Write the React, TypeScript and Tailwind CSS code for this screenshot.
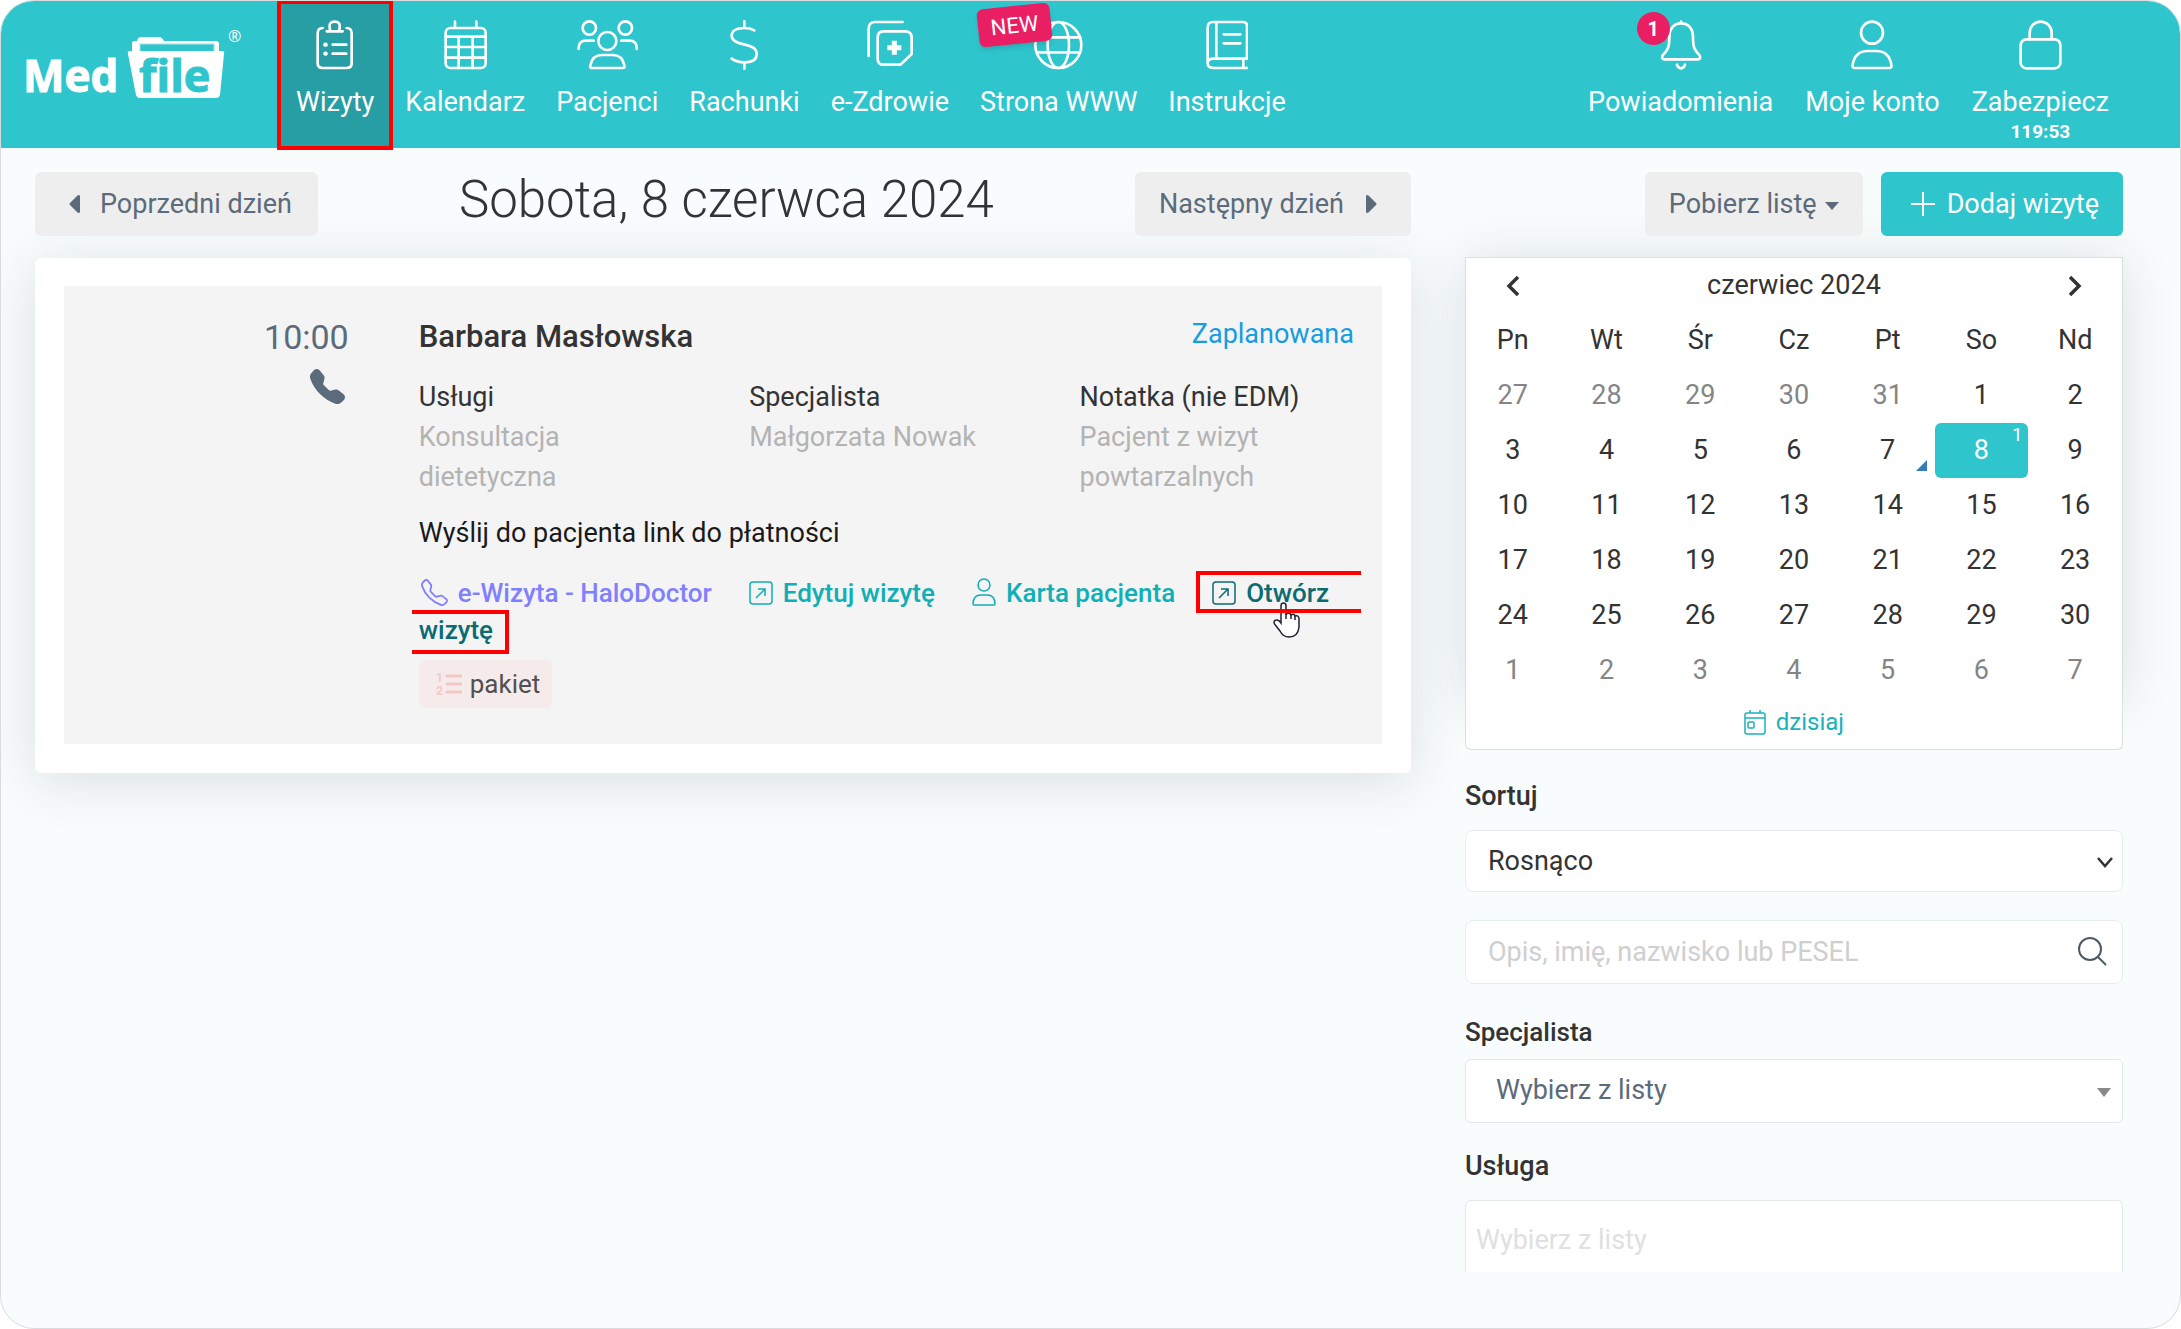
import { useState } from "react";
import type { ReactNode } from "react";
import { BsTelephone, BsTelephoneFill } from "react-icons/bs";
import { twMerge } from "tailwind-merge";

interface IconProps {
  children: ReactNode;
  box: string;
  className?: string;
}

// Nav icons share a 50px height, three drawing units per pixel
function NavIcon({ children, box, className }: IconProps) {
  return (
    <svg
      viewBox={box}
      className={twMerge("h-[50px] w-auto", className)}
      fill="none"
      stroke="currentColor"
      strokeWidth={8}
      strokeLinecap="round"
      strokeLinejoin="round"
      aria-hidden="true"
    >
      {children}
    </svg>
  );
}

const icons = {
  visits: (
    <NavIcon box="0 0 112 150">
      <path d="M20 24Q5 24 5 40V130Q5 144 19 144H93Q107 144 107 130V40Q107 24 92 24" />
      <path d="M32 34H80M43 33C36 8 46 5 56 5s20 3 13 28" />
      <path d="M28 74h1M28 101h1" strokeWidth={13} />
      <path d="M50 74H91M50 101H91" />
    </NavIcon>
  ),
  calendar: (
    <NavIcon box="0 0 130 150">
      <rect x="5" y="24" width="120" height="120" rx="14" />
      <path d="M5 50H125M5 81H125M5 113H125M44 50V144M86 50V144M33 5V22M97 5V22" />
    </NavIcon>
  ),
  patients: (
    <NavIcon box="0 0 184 150">
      <circle cx="37" cy="24" r="20" />
      <circle cx="145" cy="24" r="20" />
      <circle cx="91" cy="63" r="27" />
      <path d="M5 87V84Q5 62 27 62H50M179 87V84Q179 62 157 62H133" />
      <path d="M44 144Q38 144 40 136Q46 105 75 105H107Q136 105 142 136Q144 144 138 144Z" />
    </NavIcon>
  ),
  bills: (
    <NavIcon box="0 0 85 150">
      <path d="M43 4V22M43 128V146M73 31Q60 24 44 24C18 24 5 34 5 47C5 62 20 68 42 73C66 79 80 84 80 102C80 120 64 127 44 127C28 127 16 124 5 116" />
    </NavIcon>
  ),
  health: (
    <NavIcon box="0 0 138 150">
      <path d="M5 108V26Q5 6 25 6H107" />
      <path d="M50 34H114Q134 34 134 54V102L100 134H50Q32 134 32 116V52Q32 34 50 34Z" />
      <path d="M82 62V104M61 83H103" strokeWidth={15} strokeLinecap="butt" />
    </NavIcon>
  ),
  website: (
    <NavIcon box="0 0 146 150">
      <circle cx="73" cy="75" r="69" />
      <ellipse cx="73" cy="75" rx="32" ry="69" />
      <path d="M8 52H138M8 97H138" />
    </NavIcon>
  ),
  manual: (
    <NavIcon box="0 0 128 150">
      <path d="M5 130V22Q5 6 21 6H111Q123 6 123 18V116H21Q5 116 5 130Q5 144 21 144H124M31 6V116M112 116V144M53 43H103M53 70H103" />
    </NavIcon>
  ),
  bell: (
    <NavIcon box="0 0 127 150">
      <path d="M63 5V10M63 10C40 10 28 28 28 50C28 82 24 90 8 106Q3 118 14 118H113Q124 118 119 106C103 90 99 82 99 50C99 28 87 10 63 10Z" />
      <path d="M51 134Q54 145 63 145Q72 145 75 134" />
    </NavIcon>
  ),
  account: (
    <NavIcon box="0 0 126 150">
      <circle cx="63" cy="38" r="33" />
      <path d="M12 144Q3 144 5 134Q12 93 50 93H76Q114 93 121 134Q123 144 114 144Z" />
    </NavIcon>
  ),
  lock: (
    <NavIcon box="0 0 129 150">
      <rect x="5" y="58" width="119" height="87" rx="17" />
      <path d="M32 58V38A33 33 0 0 1 98 38V58" />
    </NavIcon>
  ),
};

function Logo() {
  return (
    <svg
      viewBox="0 0 230 100"
      className="mt-2 h-[100px] w-[230px] font-['Open_Sans',sans-serif] font-bold"
      role="img"
      aria-label="MedFile"
    >
      <path
        d="M109 30V24Q109 22 112 22H114Q115 18 118 18H136Q139 18 141 22H193Q196 22 196 25V34H109Z"
        fill="#fff"
      />
      <rect x="117" y="25" width="74" height="9" fill="#2fc5cd" stroke="#a5e4e8" strokeWidth="1" />
      <path
        d="M107 32H199Q202 32 201 35L197 76Q196 79 193 79H117Q114 79 113 76L105 35Q104 32 107 32Z"
        fill="#fff"
      />
      <text x="0" y="73" fontSize="44" fill="#fff" stroke="#fff">
        Med
      </text>
      <text x="116" y="73" fontSize="45" fill="#2fc5cd" stroke="#2fc5cd">
        file
      </text>
      <text x="205" y="23" fontSize="16" fontWeight="400" fill="#fff">
        ®
      </text>
    </svg>
  );
}

function NavLink({
  icon,
  label,
  active,
  badge,
  note,
}: {
  icon: ReactNode;
  label: string;
  active?: boolean;
  badge?: ReactNode;
  note?: string;
}) {
  return (
    <a href="#" className="relative flex flex-col items-center px-[15px] pt-[19px] text-white">
      {active && (
        <span className="absolute -top-px -right-1 -bottom-0.5 -left-1 border-4 border-[#ff0000] bg-[#279da4]" />
      )}
      <span className="relative">
        {icon}
        {badge}
      </span>
      <span className="relative mt-3.5 text-[27px] leading-9 whitespace-nowrap">{label}</span>
      {note && <span className="text-[19px] leading-6 font-bold">{note}</span>}
    </a>
  );
}

function Header() {
  return (
    <header className="flex h-[147px] justify-between bg-[#2fc5cd] pr-14 pl-[22px]">
      <div className="flex">
        <a href="#" className="mt-2.5 mr-7">
          <Logo />
        </a>
        <nav className="flex gap-px">
          <NavLink icon={icons.visits} label="Wizyty" active />
          <NavLink icon={icons.calendar} label="Kalendarz" />
          <NavLink icon={icons.patients} label="Pacjenci" />
          <NavLink icon={icons.bills} label="Rachunki" />
          <NavLink icon={icons.health} label="e-Zdrowie" />
          <NavLink
            icon={icons.website}
            label="Strona WWW"
            badge={
              <span className="absolute -top-3.5 right-8 flex h-[38px] w-[73px] -rotate-6 items-center justify-center rounded-md bg-[#e91e63] text-[22px] shadow-md">
                NEW
              </span>
            }
          />
          <NavLink icon={icons.manual} label="Instrukcje" />
        </nav>
      </div>
      <nav className="flex gap-0.5">
        <NavLink
          icon={icons.bell}
          label="Powiadomienia"
          badge={
            <span className="absolute -top-2 right-8 flex size-[33px] items-center justify-center rounded-full bg-[#e91e63] text-[20px] font-bold">
              1
            </span>
          }
        />
        <NavLink icon={icons.account} label="Moje konto" />
        <NavLink icon={icons.lock} label="Zabezpiecz" note="119:53" />
      </nav>
    </header>
  );
}

function OpenIcon() {
  return (
    <svg viewBox="0 0 24 24" className="mr-2.5 inline size-6 align-[-3px]" fill="none" stroke="currentColor" strokeWidth="1.5" aria-hidden="true">
      <rect x="1" y="1" width="22" height="22" rx="3" />
      <path d="M7 17L16 8M9 8H16V15" />
    </svg>
  );
}

function PersonIcon() {
  return (
    <svg viewBox="0 0 24 28" className="mr-2.5 inline h-7 w-6 align-[-4px]" fill="none" stroke="currentColor" strokeWidth="1.5" aria-hidden="true">
      <circle cx="12" cy="7" r="6" />
      <path d="M1 26Q1 17 9 17H15Q23 17 23 26Q23 27 22 27H2Q1 27 1 26Z" />
    </svg>
  );
}

function HandCursor() {
  return (
    <svg viewBox="0 0 27 36" className="absolute top-[27px] left-[61px] h-9 w-[27px]" aria-hidden="true">
      <path
        d="M8 21V4Q8 1 10.500 1T13 4V12Q17 10 18 13Q21 11 22 14Q26 13 26 17V25Q25 35 16 35Q10 35 7 29L1.500 22Q0 18 4 18Q6 18 8 21Z"
        fill="#fff"
        stroke="#223"
        strokeWidth="1.5"
      />
      <path d="M13 12V17M18 13V17M22 14V18" stroke="#223" strokeWidth="1.5" />
    </svg>
  );
}

const details = [
  { title: "Usługi", text: "Konsultacja dietetyczna" },
  { title: "Specjalista", text: "Małgorzata Nowak" },
  { title: "Notatka (nie EDM)", text: "Pacjent z wizyt powtarzalnych" },
];

function VisitCard() {
  return (
    <article className="mt-[22px] rounded-md bg-white px-[29px] pt-7 pb-[29px] shadow-[0_8px_55px_rgba(40,50,55,0.14)]">
      <div className="flex bg-[#f4f4f4] pt-[27px] pr-7 pb-9">
        <div className="mt-1 flex w-[27.5%] shrink-0 flex-col items-end pr-[70px] text-[#5b6b7b]">
          <time className="text-[34px] leading-10">10:00</time>
          <BsTelephoneFill className="mt-3 mr-1 size-[35px]" />
        </div>
        <div className="min-w-0 flex-1">
          <div className="flex justify-between">
            <h2 className="mt-1 text-[31px] leading-10 font-medium">Barbara Masłowska</h2>
            <span className="mt-px text-[27px] leading-10 text-[#169ce0]">Zaplanowana</span>
          </div>
          <div className="mt-5 grid grid-cols-3 gap-x-14 text-[27px] leading-10">
            {details.map((item) => (
              <div key={item.title}>
                <h3>{item.title}</h3>
                <p className="text-[#b3b3b3]">{item.text}</p>
              </div>
            ))}
          </div>
          <p className="mt-4 text-[27px] leading-10 text-[#1a1a1a]">Wyślij do pacjenta link do płatności</p>
          <div className="mt-[22px] text-[26px] leading-[37px] font-medium text-[#10afb6]">
            <a href="#" className="mr-[37px] ml-0.5 inline-block whitespace-nowrap text-[#8080ff]">
              <BsTelephone className="mr-2.5 inline size-[27px] align-[-4px]" />
              e-Wizyta - HaloDoctor
            </a>
            <a href="#" className="mr-[37px] inline-block whitespace-nowrap">
              <OpenIcon />
              Edytuj wizytę
            </a>
            <a href="#" className="mr-[37px] inline-block whitespace-nowrap">
              <PersonIcon />
              Karta pacjenta
            </a>
            <a href="#" className="text-[#0b6b72]">
              <span className="relative inline-block whitespace-nowrap">
                <OpenIcon />
                Otwórz
                <HandCursor />
                <span className="absolute -top-1 -right-8 -left-4 h-[42px] border-4 border-r-0 border-[#ff0000]" />
              </span>{" "}
              <span className="relative inline-block">
                wizytę
                <span className="absolute -top-0.5 -right-4 -left-[7px] h-11 border-4 border-l-0 border-[#ff0000]" />
              </span>
            </a>
          </div>
          <span className="mt-[11px] inline-flex h-12 items-center rounded-md bg-[#f4ebea] pr-3 pl-4 text-[26px] text-[#505050]">
            <svg viewBox="0 0 27 30" className="mr-2 h-[30px] w-[27px] text-[#f5c6c6]" aria-hidden="true">
              <path d="M12 7H26M12 15H26M12 23H26" stroke="currentColor" strokeWidth="3" strokeLinecap="round" />
              <text x="1" y="13" fontSize="12" fontWeight="700" fill="currentColor">
                1
              </text>
              <text x="1" y="26" fontSize="12" fontWeight="700" fill="currentColor">
                2
              </text>
            </svg>
            pakiet
          </span>
        </div>
      </div>
    </article>
  );
}

const weekDays = ["Pn", "Wt", "Śr", "Cz", "Pt", "So", "Nd"];

// The grid starts on Monday, 27 May 2024
const weeks = Array.from({ length: 6 }, (_, w) =>
  Array.from({ length: 7 }, (_, d) => new Date(2024, 4, 27 + w * 7 + d))
);

function MonthCalendar() {
  const [selected, setSelected] = useState(8);

  return (
    <div className="mt-[21px]">
      <div className="border border-b-0 border-[#dcdfdf] bg-white shadow-[0_4px_50px_rgba(40,50,55,0.14)]">
        <table className="w-full table-fixed text-center text-[27px]">
          <thead>
            <tr className="h-[55px]">
              <th>
                <button aria-label="Poprzedni miesiąc" className="block w-full">
                  <svg viewBox="0 0 14 22" className="mx-auto h-[22px] w-3.5" fill="none" stroke="currentColor" strokeWidth="3.500">
                    <path d="M12 2L3 11L12 20" />
                  </svg>
                </button>
              </th>
              <th colSpan={5} className="font-normal">
                czerwiec 2024
              </th>
              <th>
                <button aria-label="Następny miesiąc" className="block w-full">
                  <svg viewBox="0 0 14 22" className="mx-auto h-[22px] w-3.5" fill="none" stroke="currentColor" strokeWidth="3.500">
                    <path d="M2 2L11 11L2 20" />
                  </svg>
                </button>
              </th>
            </tr>
            <tr className="h-[55px]">
              {weekDays.map((day) => (
                <th key={day} className="font-normal">
                  {day}
                </th>
              ))}
            </tr>
          </thead>
          <tbody>
            {weeks.map((week, i) => (
              <tr key={i} className="h-[55px]">
                {week.map((date) => {
                  const day = date.getDate();
                  const inMonth = date.getMonth() === 5;
                  const isSelected = inMonth && day === selected;

                  return (
                    <td key={date.toISOString()} className="p-0">
                      <button
                        onClick={() => inMonth && setSelected(day)}
                        className={twMerge(
                          "relative block h-[55px] w-full rounded-md",
                          !inMonth && "text-[#858585]",
                          isSelected && "bg-[#2fc5cd] text-white"
                        )}
                      >
                        {day}
                        {inMonth && day === 8 && (
                          <span className="absolute top-0 right-1.5 text-[18px] leading-6">1</span>
                        )}
                        {inMonth && day === 7 && (
                          <svg viewBox="0 0 11 11" className="absolute right-2 bottom-[7px] size-[11px]">
                            <path d="M11 0V11H0Z" fill="#337ab7" />
                          </svg>
                        )}
                      </button>
                    </td>
                  );
                })}
              </tr>
            ))}
          </tbody>
        </table>
      </div>
      <div className="relative flex h-[52px] items-start justify-center rounded-b-md border border-t-0 border-[#dcdfdf] bg-white">
        <button className="mt-1 flex h-10 items-center gap-2.5 text-[24px] text-[#18b2ba]">
          <svg viewBox="0 0 22 26" className="h-[26px] w-[22px]" fill="none" stroke="currentColor" strokeWidth="1.5" aria-hidden="true">
            <rect x="1" y="4" width="20" height="21" rx="2" />
            <path d="M1 9H21M6 1V4M16 1V4" />
            <rect x="4" y="13" width="6" height="6" rx="1" />
          </svg>
          dzisiaj
        </button>
      </div>
    </div>
  );
}

function Filters() {
  return (
    <form className="flex flex-col text-[27px]">
      <label htmlFor="sort" className="mt-7 leading-9 font-medium">
        Sortuj
      </label>
      <div className="relative mt-4">
        <select
          id="sort"
          className="h-[62px] w-full appearance-none rounded-lg border border-[#e6ecef] bg-white px-[22px]"
        >
          <option>Rosnąco</option>
        </select>
        <svg viewBox="0 0 16 11" className="pointer-events-none absolute top-[27px] right-2.5 h-[11px] w-4" fill="none" stroke="currentColor" strokeWidth="2.500">
          <path d="M1 1L8 9L15 1" />
        </svg>
      </div>
      <div className="relative mt-7">
        <input
          type="search"
          aria-label="Szukaj"
          placeholder="Opis, imię, nazwisko lub PESEL"
          className="h-16 w-full rounded-lg border border-[#e6ecef] bg-white px-[22px] placeholder:text-[#cfcfcf]"
        />
        <svg viewBox="0 0 29 29" className="pointer-events-none absolute top-[17px] right-4 size-[29px] text-[#4d5a66]" fill="none" stroke="currentColor" strokeWidth="2">
          <circle cx="12" cy="12" r="11" />
          <path d="M20 20L28 28" />
        </svg>
      </div>
      <label htmlFor="specialist" className="mt-[30px] text-[26px] leading-9 font-medium">
        Specjalista
      </label>
      <div className="relative mt-[9px]">
        <select
          id="specialist"
          className="h-16 w-full appearance-none rounded-md border border-[#e2e7ea] bg-white px-[30px] pb-0.5 text-[#5b6b7b]"
        >
          <option>Wybierz z listy</option>
        </select>
        <svg viewBox="0 0 14 9" className="pointer-events-none absolute top-[29px] right-3 h-[9px] w-3.5">
          <path d="M0 0H14L7 9Z" fill="#888" />
        </svg>
      </div>
      <label htmlFor="service" className="mt-[25px] leading-9 font-medium">
        Usługa
      </label>
      <input
        id="service"
        placeholder="Wybierz z listy"
        className="mt-4 h-[72px] rounded-t-md border border-b-0 border-[#e2e7ea] bg-white px-2.5 pt-1.5 placeholder:text-[#e0e0e0]"
      />
    </form>
  );
}

export default function App() {
  return (
    <div className="min-h-screen overflow-hidden rounded-[34px] border border-[#d8dcdd] bg-[#f8fcfd] font-[Roboto,'Noto_Sans',sans-serif] text-[#333]">
      <Header />
      <main className="grid grid-cols-[23fr_11fr] gap-x-[54px] pt-6 pr-[57px] pb-12 pl-[34px]">
        <section className="min-w-0">
          <div className="flex h-16 items-start justify-between text-[27px] text-[#5b6b7b]">
            <button className="flex h-16 items-center rounded-md bg-[#eee] pr-[26px] pl-[34px]">
              <svg viewBox="0 0 11 18" className="mr-5 h-[18px] w-[11px]">
                <path d="M11 1V17Q10 19 8 17L1 10Q0 9 1 8L8 1Q10-1 11 1Z" fill="currentColor" />
              </svg>
              Poprzedni dzień
            </button>
            <h1 className="text-[51px] leading-14 font-light text-[#333]">Sobota, 8 czerwca 2024</h1>
            <button className="flex h-16 items-center rounded-md bg-[#eee] pr-[34px] pl-6">
              Następny dzień
              <svg viewBox="0 0 11 18" className="ml-[22px] h-[18px] w-[11px]">
                <path d="M0 1V17Q1 19 3 17L10 10Q11 9 10 8L3 1Q1-1 0 1Z" fill="currentColor" />
              </svg>
            </button>
          </div>
          <VisitCard />
        </section>
        <aside className="min-w-0">
          <div className="flex h-16 justify-end gap-[18px] text-[27px]">
            <button className="flex h-16 items-center rounded-md bg-[#eee] px-6 text-[#5b6b7b]">
              Pobierz listę
              <svg viewBox="0 0 14 8" className="mt-1 ml-2 h-2 w-3.5">
                <path d="M0 0H14L7 8Z" fill="currentColor" />
              </svg>
            </button>
            <button className="flex h-16 items-center rounded-md bg-[#2fc5cd] pr-6 pl-[30px] text-white">
              <svg viewBox="0 0 24 24" className="mr-3 size-6" stroke="currentColor" strokeWidth="2">
                <path d="M12 0V24M0 12H24" />
              </svg>
              Dodaj wizytę
            </button>
          </div>
          <MonthCalendar />
          <Filters />
        </aside>
      </main>
    </div>
  );
}
